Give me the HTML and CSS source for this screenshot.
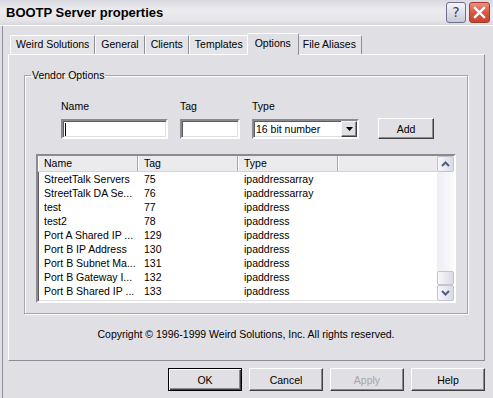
FILE: index.html
```html
<!DOCTYPE html>
<html lang="en">

<head>
    <meta charset="UTF-8">
    <title>BOOTP Server properties</title>
    <link rel="stylesheet" href="styles.css">
</head>

<body>
    <div class="window">
        <div class="titlebar">
            <span class="title">BOOTP Server properties</span>
            <div class="caption-buttons">
                <span class="cap-btn help">?</span>
                <span class="cap-btn close">
                    <svg width="13" height="13" viewBox="0 0 13 13">
                        <path d="M2 2 L11 11 M11 2 L2 11" stroke="#fff" stroke-width="2.4" stroke-linecap="square" />
                    </svg>
                </span>
            </div>
        </div>

        <div class="dialog">
            <div class="tabs">
                <span class="tab">Weird Solutions</span>
                <span class="tab">General</span>
                <span class="tab">Clients</span>
                <span class="tab">Templates</span>
                <span class="tab active">Options</span>
                <span class="tab">File Aliases</span>
            </div>

            <div class="panel">
                <fieldset class="group">
                    <legend>Vendor Options</legend>

                    <div class="entry">
                        <div class="field-col name-col">
                            <span class="label">Name</span>
                            <div class="textbox"><span class="caret"></span></div>
                        </div>
                        <div class="field-col tag-col">
                            <span class="label">Tag</span>
                            <div class="textbox"></div>
                        </div>
                        <div class="field-col type-col">
                            <span class="label">Type</span>
                            <div class="combo">
                                <span class="combo-value">16 bit number</span>
                                <span class="combo-btn">
                                    <svg width="7" height="4" viewBox="0 0 7 4"><path d="M0 0 H7 L3.5 4 Z" fill="#000" /></svg>
                                </span>
                            </div>
                        </div>
                        <button class="btn add-btn">Add</button>
                    </div>

                    <div class="listview">
                        <div class="lv-body">
                            <div class="lv-head">
                                <span>Name</span>
                                <span>Tag</span>
                                <span>Type</span>
                                <span></span>
                            </div>
                            <div class="lv-row"><span>StreetTalk Servers</span><span>75</span><span>ipaddressarray</span></div>
                            <div class="lv-row"><span>StreetTalk DA Se...</span><span>76</span><span>ipaddressarray</span></div>
                            <div class="lv-row"><span>test</span><span>77</span><span>ipaddress</span></div>
                            <div class="lv-row"><span>test2</span><span>78</span><span>ipaddress</span></div>
                            <div class="lv-row"><span>Port A Shared IP ...</span><span>129</span><span>ipaddress</span></div>
                            <div class="lv-row"><span>Port B IP Address</span><span>130</span><span>ipaddress</span></div>
                            <div class="lv-row"><span>Port B Subnet Ma...</span><span>131</span><span>ipaddress</span></div>
                            <div class="lv-row"><span>Port B Gateway I...</span><span>132</span><span>ipaddress</span></div>
                            <div class="lv-row"><span>Port B Shared IP ...</span><span>133</span><span>ipaddress</span></div>
                        </div>
                        <div class="scrollbar">
                            <span class="sb-btn">
                                <svg width="9" height="6" viewBox="0 0 9 6"><path d="M1 5 L4.5 1.5 L8 5" fill="none" stroke="#4d6185" stroke-width="2" /></svg>
                            </span>
                            <span class="sb-track"><span class="sb-thumb"></span></span>
                            <span class="sb-btn">
                                <svg width="9" height="6" viewBox="0 0 9 6"><path d="M1 1 L4.5 4.5 L8 1" fill="none" stroke="#4d6185" stroke-width="2" /></svg>
                            </span>
                        </div>
                    </div>
                </fieldset>

                <p class="copyright">Copyright &copy; 1996-1999 Weird Solutions, Inc. All rights reserved.</p>
            </div>

            <div class="buttons">
                <button class="btn default">OK</button>
                <button class="btn">Cancel</button>
                <button class="btn" disabled>Apply</button>
                <button class="btn">Help</button>
            </div>
        </div>
    </div>
</body>

</html>
```

FILE: styles.css
```css
* {
    box-sizing: border-box;
}

body {
    margin: 0;
    width: 493px;
    height: 398px;
    overflow: hidden;
    background-color: #e0dfe3;
    font-family: "Liberation Sans", Arial, sans-serif;
    font-size: 10.5px;
    color: #000;
}

.window {
    width: 493px;
    height: 398px;
}

/* title bar */
.titlebar {
    height: 26px;
    display: flex;
    align-items: center;
    justify-content: space-between;
    padding: 0 3px 1px 6px;
    background: linear-gradient(#d9d9e0, #ececf0 40%, #e6e6ea 80%, #d6d6dc);
    border-bottom: 1px solid #fff;
}

.title {
    font-size: 13px;
    font-weight: bold;
}

.caption-buttons {
    display: flex;
    gap: 3px;
}

.cap-btn {
    width: 20px;
    height: 21px;
    border-radius: 3px;
    display: flex;
    align-items: center;
    justify-content: center;
}

.help {
    border: 1px solid #6f6f8b;
    background: linear-gradient(#f4f4f8, #c9cad9);
    color: #41415c;
    font-family: "DejaVu Sans", sans-serif;
    font-size: 14px;
}

.close {
    width: 21px;
    border: 1px solid #a03a2c;
    background: linear-gradient(#ee8f7e, #d9523d 55%, #c6452f);
}

/* dialog body */
.dialog {
    margin-left: 2px;
    border-left: 1px solid #8e8e9c;
    padding: 7px 8px 0 5px;
    height: 372px;
}

.tabs {
    display: flex;
    align-items: flex-end;
    height: 21px;
    padding-left: 2px;
}

.tab {
    height: 19px;
    line-height: 17px;
    padding: 0 5px;
    border: 1px solid;
    border-bottom: 0;
    border-color: #fff #8d8d96 transparent #fff;
    border-radius: 2px 2px 0 0;
    background-color: #e4e4e8;
    white-space: nowrap;
}

.tab.active {
    height: 22px;
    line-height: 19px;
    margin: 0 -2px -1px;
    padding: 0 7px;
    position: relative;
    z-index: 1;
    background-color: #e0dfe3;
}

.panel {
    height: 307px;
    border: 1px solid;
    border-color: #fff #8d8d96 #8d8d96 #fff;
    padding: 14px 16px 0 15px;
}

.group {
    margin: 0;
    padding: 19px 10px 10px 6px;
    border: 1px solid #a3a3a8;
    box-shadow: 1px 1px 0 #fff, inset 1px 1px 0 #fff;
}

.group legend {
    padding: 0 1px;
    line-height: 12px;
}

/* entry row */
.entry {
    display: flex;
    align-items: flex-end;
    margin-left: 30px;
}

.field-col {
    display: flex;
    flex-direction: column;
    gap: 6px;
}

.label {
    line-height: 13px;
}

.name-col {
    width: 107px;
    margin-right: 12px;
}

.tag-col {
    width: 60px;
    margin-right: 12px;
}

.type-col {
    width: 107px;
    margin-right: 19px;
}

.textbox,
.combo,
.listview {
    border: 2px solid;
    border-color: #8a8a8f #fff #fff #8a8a8f;
    box-shadow: inset 1px 1px 0 #5c5c60, inset -1px -1px 0 #e0dfe3;
    background-color: #fff;
}

.textbox {
    height: 20px;
    padding: 2px 0 0 2px;
}

.caret {
    display: block;
    width: 1px;
    height: 13px;
    background-color: #000;
}

.combo {
    height: 20px;
    display: flex;
    align-items: center;
    justify-content: space-between;
    padding: 0 0 0 2px;
}

.combo-btn {
    width: 16px;
    height: 16px;
    display: flex;
    align-items: center;
    justify-content: center;
    border: 1px solid;
    border-color: #f4f4f6 #404040 #404040 #f4f4f6;
    box-shadow: inset -1px -1px 0 #8a8a8f;
    background-color: #e0dfe3;
    margin-right: 0;
}

.btn {
    font-family: inherit;
    font-size: inherit;
    color: #000;
    width: 74px;
    height: 23px;
    padding: 0;
    border: 1px solid;
    border-color: #fff #404040 #404040 #fff;
    box-shadow: inset -1px -1px 0 #8a8a8f;
    background-color: #e0dfe3;
}

.add-btn {
    width: 56px;
    height: 21px;
}

.btn.default {
    outline: 1px solid #000;
    outline-offset: -1px;
    border-color: #000;
    box-shadow: inset 1px 1px 0 #fff, inset -1px -1px 0 #404040, inset -2px -2px 0 #8a8a8f;
}

.btn:disabled {
    color: #a7a6ab;
}

/* list view */
.listview {
    margin: 15px 0 0 5px;
    width: 420px;
    height: 149px;
    display: flex;
    overflow: hidden;
}

.lv-body {
    flex: 1;
    overflow: hidden;
}

.lv-head,
.lv-row {
    display: grid;
    grid-template-columns: 100px 100px 100px 1fr;
}

.lv-head {
    height: 16px;
    line-height: 15px;
    background-color: #ebebee;
    border-bottom: 1px solid #d4d4d8;
}

.lv-head span {
    padding-left: 6px;
    border-right: 1px solid #a7a7ab;
    box-shadow: inset 1px 0 0 #fff;
}

.lv-head span:last-child {
    border-right: 0;
}

.lv-row {
    height: 14px;
    line-height: 14px;
}

.lv-row span {
    padding-left: 6px;
    white-space: nowrap;
    overflow: hidden;
}

.scrollbar {
    width: 17px;
    display: flex;
    flex-direction: column;
    background: linear-gradient(90deg, #eeedf3, #fbfbfd);
}

.sb-btn,
.sb-thumb {
    display: flex;
    align-items: center;
    justify-content: center;
    height: 16px;
    border: 1px solid #c3c3d3;
    border-radius: 2px;
    background: linear-gradient(90deg, #f7f7fa, #dadae4);
}

.sb-track {
    flex: 1;
    display: flex;
    flex-direction: column;
    justify-content: flex-end;
}

.sb-thumb {
    height: 14px;
}

.copyright {
    margin: 14px 0 0;
    line-height: 13px;
    text-align: center;
}

.buttons {
    display: flex;
    justify-content: flex-end;
    gap: 7px;
    margin-top: 7px;
}
```
